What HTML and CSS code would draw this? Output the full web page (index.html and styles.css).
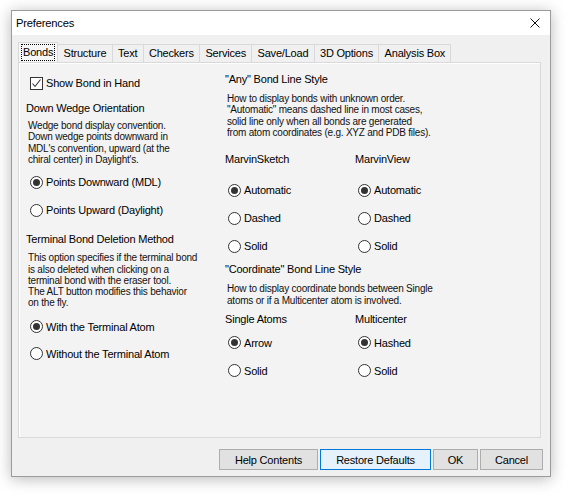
FILE: index.html
```html
<!DOCTYPE html>
<html>
<head>
<meta charset="utf-8">
<link rel="stylesheet" href="styles.css">
</head>
<body>
<div class="window">
  <div class="titlebar">
    <span class="title">Preferences</span>
    <svg class="close" width="10" height="10" viewBox="0 0 10 10"><path d="M0.5 0.5 L9.5 9.5 M9.5 0.5 L0.5 9.5" stroke="#111" stroke-width="1" fill="none"/></svg>
  </div>
  <div class="client">
    <div class="tabs">
      <div class="tab active"><span class="focus">Bonds</span></div>
      <div class="tab">Structure</div>
      <div class="tab">Text</div>
      <div class="tab">Checkers</div>
      <div class="tab">Services</div>
      <div class="tab">Save/Load</div>
      <div class="tab">3D Options</div>
      <div class="tab">Analysis Box</div>
    </div>
    <div class="panel">
      <div class="col left">
        <div class="opt check-row"><span class="checkbox"><svg width="11" height="11" viewBox="0 0 11 11"><path d="M1.5 5.5 L4 8.5 L9.5 1.5" stroke="#333" stroke-width="1.1" fill="none"/></svg></span>Show Bond in Hand</div>
        <div class="heading h-wedge">Down Wedge Orientation</div>
        <div class="desc d-wedge">Wedge bond display convention.<br>Down wedge points downward in<br>MDL's convention, upward (at the<br>chiral center) in Daylight's.</div>
        <div class="opt o-first"><span class="radio on"></span>Points Downward (MDL)</div>
        <div class="opt o-next"><span class="radio"></span>Points Upward (Daylight)</div>
        <div class="heading h-term">Terminal Bond Deletion Method</div>
        <div class="desc d-term">This option specifies if the terminal bond<br>is also deleted when clicking on a<br>terminal bond with the eraser tool.<br>The ALT button modifies this behavior<br>on the fly.</div>
        <div class="opt o-term"><span class="radio on"></span>With the Terminal Atom</div>
        <div class="opt o-term2"><span class="radio"></span>Without the Terminal Atom</div>
      </div>
      <div class="col right">
        <div class="heading h-any">"Any" Bond Line Style</div>
        <div class="desc d-any">How to display bonds with unknown order.<br>"Automatic" means dashed line in most cases,<br>solid line only when all bonds are generated<br>from atom coordinates (e.g. XYZ and PDB files).</div>
        <div class="pair p-any">
          <div class="sub">
            <div class="heading">MarvinSketch</div>
            <div class="opt o-sub"><span class="radio on"></span>Automatic</div>
            <div class="opt o-next"><span class="radio"></span>Dashed</div>
            <div class="opt o-next"><span class="radio"></span>Solid</div>
          </div>
          <div class="sub">
            <div class="heading">MarvinView</div>
            <div class="opt o-sub"><span class="radio on"></span>Automatic</div>
            <div class="opt o-next"><span class="radio"></span>Dashed</div>
            <div class="opt o-next"><span class="radio"></span>Solid</div>
          </div>
        </div>
        <div class="heading h-coord">"Coordinate" Bond Line Style</div>
        <div class="desc d-coord">How to display coordinate bonds between Single<br>atoms or if a Multicenter atom is involved.</div>
        <div class="pair p-coord">
          <div class="sub">
            <div class="heading">Single Atoms</div>
            <div class="opt o-sub2"><span class="radio on"></span>Arrow</div>
            <div class="opt o-next"><span class="radio"></span>Solid</div>
          </div>
          <div class="sub">
            <div class="heading">Multicenter</div>
            <div class="opt o-sub2"><span class="radio on"></span>Hashed</div>
            <div class="opt o-next"><span class="radio"></span>Solid</div>
          </div>
        </div>
      </div>
    </div>
    <div class="buttons">
      <button class="btn b-help">Help Contents</button>
      <button class="btn default b-restore">Restore Defaults</button>
      <button class="btn b-ok">OK</button>
      <button class="btn b-cancel">Cancel</button>
    </div>
  </div>
</div>
</body>
</html>
```

FILE: styles.css
```css
* { box-sizing: border-box; }
html, body { margin: 0; padding: 0; background: #ffffff; }
body {
  font-family: "Liberation Sans", Arial, sans-serif;
  font-size: 11px;
  letter-spacing: -0.2px;
  color: #000;
  width: 570px;
  height: 496px;
  overflow: hidden;
}
.window {
  margin: 10px 0 0 11px;
  width: 540px;
  height: 467px;
  border: 1px solid #9b9b9b;
  background: #f0f0f0;
  box-shadow: 0 2px 14px rgba(0,0,0,0.28);
  display: flex;
  flex-direction: column;
}
.titlebar {
  height: 24px;
  background: #fff;
  display: flex;
  align-items: center;
  justify-content: space-between;
  padding: 0 10px 0 4px;
}
.title { font-size: 11.2px; color: #000; }
.close { display: block; }
.client {
  flex: 1;
  padding: 7px 0 0 6px;
}
.tabs {
  display: flex;
  height: 20px;
  align-items: flex-end;
}
.tab {
  height: 18px;
  line-height: 17px;
  padding: 0 5.3px;
  border: 1px solid #d9d9d9;
  border-bottom: none;
  border-left: none;
  background: #f0f0f0;
  white-space: nowrap;
}
.tab.active {
  height: 20px;
  border: 1px solid #d9d9d9;
  border-bottom: none;
  background: #f6f6f6;
  padding: 1px 2px 0;
  line-height: 16px;
}
.focus {
  display: inline-block;
  border: 1px dotted #000;
  padding: 0 1px;
  line-height: 15px;
}
.panel {
  width: 523px;
  height: 376px;
  border: 1px solid #d9d9d9;
  box-shadow: inset 1px 1px 0 #fff;
  background: #f3f3f3;
  display: flex;
  padding-left: 7px;
}
.col { display: flex; flex-direction: column; }
.left { width: 199px; padding-top: 10px; }
.right { width: 300px; padding-top: 8px; }
.heading { height: 16px; line-height: 16px; white-space: nowrap; }
.desc {
  font-size: 10px;
  letter-spacing: -0.22px;
  line-height: 11.33px;
  padding-left: 2px;
  white-space: nowrap;
  color: #111;
}
.opt {
  height: 20px;
  display: flex;
  align-items: center;
  white-space: nowrap;
  padding-left: 4px;
}
.checkbox {
  width: 13px; height: 13px;
  border: 1px solid #333;
  background: #fff;
  margin-right: 3px;
  display: flex; align-items: center; justify-content: center;
}
.checkbox svg { display: block; }
.radio {
  width: 13px; height: 13px;
  border: 1px solid #333;
  border-radius: 50%;
  background: #fff;
  margin-right: 3px;
  display: flex; align-items: center; justify-content: center;
  flex: none;
}
.radio.on::after {
  content: "";
  width: 7px; height: 7px;
  border-radius: 50%;
  background: #333;
}
/* left column spacing */
.h-wedge { margin-top: 7px; }
.d-wedge { margin-top: 4px; }
.o-first { margin-top: 7px; }
.o-next { margin-top: 8px; }
.h-term { margin-top: 11px; }
.d-term { margin-top: 5px; line-height: 11.25px; }
.o-term { margin-top: 8px; }
.o-term2 { margin-top: 7px; }
/* right column spacing */
.h-any { margin-top: 0; }
.d-any { margin-top: 6px; }
.pair { display: grid; grid-template-columns: 130px 130px; }
.p-any { margin-top: 13px; }
.pair .opt { padding-left: 3px; }
.o-sub { margin-top: 13px; }
.o-sub2 { margin-top: 6px; }
.h-coord { margin-top: 5px; }
.d-coord { margin-top: 6px; }
.p-coord { margin-top: 5px; }
.buttons {
  display: flex;
  justify-content: flex-end;
  gap: 2px;
  margin-top: 11px;
  padding-right: 7px;
}
.btn {
  font-family: "Liberation Sans", Arial, sans-serif;
  font-size: 11px;
  letter-spacing: -0.2px;
  height: 21px;
  padding: 0;
  background: #e1e1e1;
  border: 1px solid #adadad;
  color: #000;
  margin: 0;
}
.b-help { width: 99px; }
.b-restore { width: 111px; }
.b-ok { width: 45px; }
.b-cancel { width: 63px; }
.btn.default {
  background: #e5f1fb;
  border: 1px solid #0078d7;
}
```
